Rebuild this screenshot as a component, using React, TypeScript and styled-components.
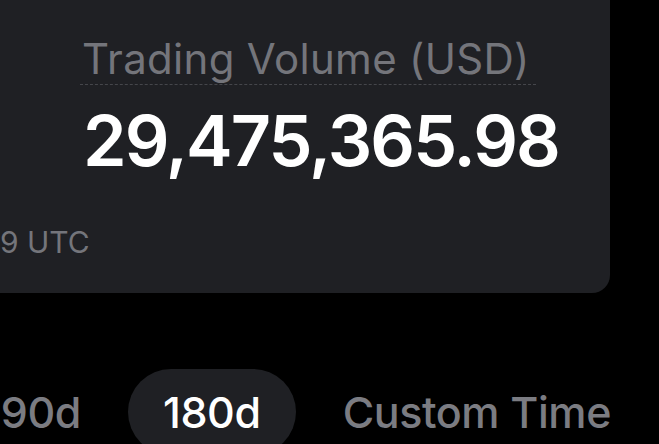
import React, { useState } from 'react'
import styled, { createGlobalStyle } from 'styled-components'

const GlobalStyle = createGlobalStyle`
  html, body {
    margin: 0;
    padding: 0;
    background: #000;
  }
  body {
    font-family: Inter, "Noto Sans", "Liberation Sans", sans-serif;
    -webkit-font-smoothing: antialiased;
  }
`

const Page = styled.div`
  width: 659px;
  height: 444px;
  overflow: hidden;
  background: #000;
  display: flex;
  flex-direction: column;
`

const StatsCard = styled.section`
  margin: -30px 0 0 -40px;
  width: 650px;
  height: 323px;
  box-sizing: border-box;
  padding: 63px 0 0 40px;
  background: #1f2024;
  border-radius: 18px;
  display: flex;
  flex-direction: column;
  flex-shrink: 0;
`

const Metric = styled.div`
  margin-left: 80px;
  display: flex;
  flex-direction: column;
  align-items: flex-start;
`

const MetricLabel = styled.span`
  font-size: 42px;
  font-weight: 400;
  color: #74757b;
  letter-spacing: 0.3px;
  padding: 0 6px 0 2px;
  border-bottom: 1px dashed #45464b;
`

const MetricValue = styled.div`
  margin-top: 13px;
  margin-left: 3px;
  font-size: 70px;
  font-weight: 600;
  color: #fff;
  letter-spacing: -1.9px;
  line-height: normal;
`

const Footnote = styled.div`
  margin-top: auto;
  margin-bottom: 33px;
  font-size: 30px;
  color: #74757b;
`

const Tabs = styled.div`
  margin-top: 76px;
  display: flex;
  justify-content: flex-end;
  gap: 12px;
  padding-right: 13px;
  flex-shrink: 0;
`

const Tab = styled.button<{ $active?: boolean }>`
  flex-shrink: 0;
  height: 86px;
  padding: 0 35px;
  border: none;
  border-radius: 43px;
  background: ${({ $active }) => ($active ? '#1f2024' : 'transparent')};
  color: ${({ $active }) => ($active ? '#fff' : '#7b7c82')};
  font-family: inherit;
  font-size: 43px;
  font-weight: 500;
  letter-spacing: -0.4px;
  display: flex;
  align-items: center;
  white-space: nowrap;
  cursor: pointer;
`

const ranges = ['90d', '180d', 'Custom Time']

const App = () => {
  const [range, setRange] = useState('180d')

  return (
    <Page>
      <GlobalStyle />
      <StatsCard>
        <Metric>
          <MetricLabel>Trading Volume (USD)</MetricLabel>
          <MetricValue>29,475,365.98</MetricValue>
        </Metric>
        <Footnote>9 UTC</Footnote>
      </StatsCard>
      <Tabs>
        {ranges.map((r) => (
          <Tab key={r} $active={r === range} onClick={() => setRange(r)}>
            {r}
          </Tab>
        ))}
      </Tabs>
    </Page>
  )
}

export default App
